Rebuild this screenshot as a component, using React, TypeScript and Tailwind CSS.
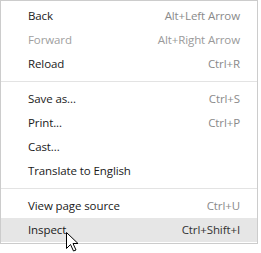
import React from 'react'

type Item = { label: string; shortcut?: string; disabled?: boolean; active?: boolean }

const groups: Item[][] = [
  [
    { label: 'Back', shortcut: 'Alt+Left Arrow' },
    { label: 'Forward', shortcut: 'Alt+Right Arrow', disabled: true },
    { label: 'Reload', shortcut: 'Ctrl+R' },
  ],
  [
    { label: 'Save as...', shortcut: 'Ctrl+S' },
    { label: 'Print...', shortcut: 'Ctrl+P' },
    { label: 'Cast...' },
    { label: 'Translate to English' },
  ],
  [
    { label: 'View page source', shortcut: 'Ctrl+U' },
    { label: 'Inspect', shortcut: 'Ctrl+Shift+I', active: true },
  ],
]

function Cursor() {
  return (
    <svg width="13" height="20" viewBox="0 0 13 20" className="absolute left-[66px] top-[232px]">
      <path
        d="M0.5 0.5 L0.5 16.5 L4.5 12.5 L7.5 19 L10 18 L7 11.5 L12 11.5 Z"
        fill="#fff"
        stroke="#000"
        strokeWidth="1"
        strokeLinejoin="miter"
      />
    </svg>
  )
}

export default function App() {
  return (
    <div
      className="relative w-[261px] h-[253px] bg-white"
      style={{ fontFamily: '"Open Sans", "Noto Sans", sans-serif' }}
    >
      <div className="w-[258px] border border-[#cccccc] bg-white pt-[3px] pb-[1px]">
        {groups.map((group, gi) => (
          <div key={gi}>
            {gi > 0 && (
              <div className="py-[5px]">
                <div className="h-px bg-[#e3e3e3]" />
              </div>
            )}
            {group.map((item) => (
              <div
                key={item.label}
                className={`flex items-center justify-between h-[24px] pl-[27px] pr-[17px] text-[11.5px] tracking-[-0.1px] ${
                  item.active ? 'bg-[#e6e6e6]' : ''
                }`}
              >
                <span className={item.disabled ? 'text-[#a0a0a0]' : 'text-[#1a1a1a]'}>{item.label}</span>
                {item.shortcut && (
                  <span className={item.active ? 'text-[#333333]' : item.disabled ? 'text-[#9a9a9a]' : 'text-[#8a8a8a]'}>
                    {item.shortcut}
                  </span>
                )}
              </div>
            ))}
          </div>
        ))}
      </div>
      <Cursor />
    </div>
  )
}
